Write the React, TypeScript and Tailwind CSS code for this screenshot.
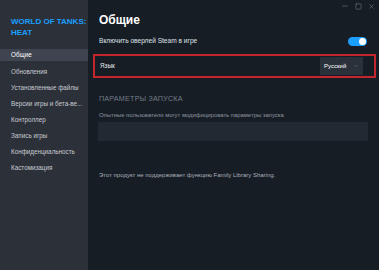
import { ChevronDown, Minus, Square, X } from "lucide-react";

const NAV = [
  "Общие",
  "Обновления",
  "Установленные файлы",
  "Версии игры и бета-ве...",
  "Контроллер",
  "Запись игры",
  "Конфиденциальность",
  "Кастомизация",
];

export default function App() {
  return (
    <div
      className="flex h-[270px] w-[379px] overflow-hidden bg-[#171d25] text-white"
      style={{ fontFamily: '"Liberation Sans", Arial, sans-serif' }}
    >
      {/* Sidebar */}
      <aside className="flex w-[88px] shrink-0 flex-col bg-[#2c3038]">
        <div className="whitespace-nowrap pl-[11px] pt-[16px] text-[8px] font-bold leading-[11px] text-[#1a9fff]">
          WORLD OF TANKS:
          <br />
          HEAT
        </div>
        <nav className="mt-[11px] flex flex-col">
          {NAV.map((item, i) => (
            <div
              key={item}
              className={
                "flex items-center whitespace-nowrap px-[11px] text-[6.3px] " +
                (i === 0 ? "mb-[3px] h-[12px] bg-[#3e4450] text-white" : "h-[16px] text-[#c7ccd3]")
              }
            >
              {item}
            </div>
          ))}
        </nav>
      </aside>

      {/* Main */}
      <main className="relative flex flex-1 flex-col">
        <div className="absolute right-[4px] top-[2px] flex items-center gap-[6px] text-[#8b929a]">
          <Minus className="h-[8px] w-[8px]" strokeWidth={1.5} />
          <Square className="h-[7px] w-[7px]" strokeWidth={1.5} />
          <X className="h-[7px] w-[7px]" strokeWidth={1.5} />
        </div>

        <h1 className="ml-[11px] mt-[13px] text-[12px] font-bold leading-[14px]">Общие</h1>

        <div className="ml-[11px] mr-[12px] mt-[8px] flex h-[12px] items-center justify-between">
          <span className="text-[6.6px] text-[#dfe3e8]">Включить оверлей Steam в игре</span>
          <div className="flex h-[9px] w-[19px] items-center justify-end rounded-full bg-[#1a9fff] pr-[1px]">
            <div className="h-[7px] w-[7px] rounded-full bg-white" />
          </div>
        </div>

        <div className="ml-[5px] mr-[3px] mt-[7px] flex h-[24px] items-center justify-between border-2 border-[#c4262e] pl-[5px] pr-[11px]">
          <span className="text-[6.3px] text-[#e6e9ed]">Язык</span>
          <div className="flex h-[18px] w-[43px] items-center justify-between bg-[#2a313b] pl-[4px] pr-[4px]">
            <span className="text-[6px] text-white">Русский</span>
            <ChevronDown className="h-[6px] w-[6px] text-[#6d7682]" strokeWidth={2} />
          </div>
        </div>

        <div className="ml-[11px] mt-[16px] text-[7.2px] tracking-[0.2px] text-[#727c88]">
          ПАРАМЕТРЫ ЗАПУСКА
        </div>
        <div className="ml-[11px] mt-[6px] text-[5.9px] text-[#8e96a0]">
          Опытные пользователи могут модифицировать параметры запуска
        </div>
        <div className="ml-[10px] mr-[11px] mt-[2px] h-[19px] bg-[#222932]" />

        <div className="ml-[11px] mt-[30px] text-[6px] text-[#a9b0b8]">
          Этот продукт не поддерживает функцию Family Library Sharing.
        </div>
      </main>
    </div>
  );
}
